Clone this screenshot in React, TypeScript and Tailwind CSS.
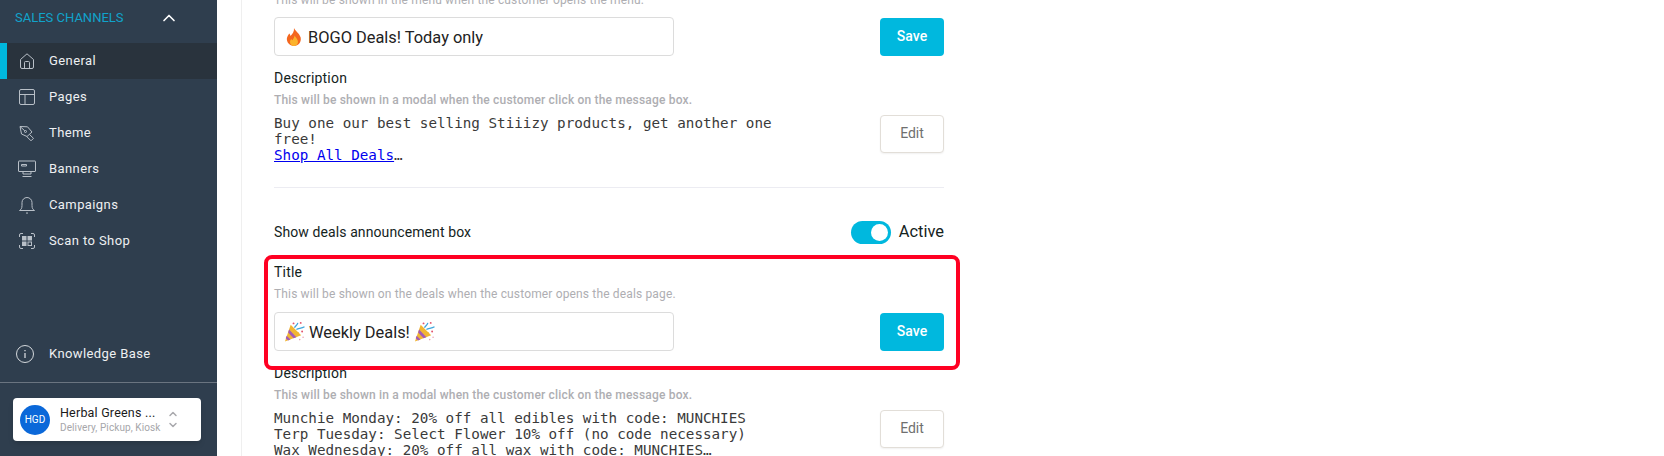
import { ChevronUp, ChevronDown } from 'lucide-react';
import type { ReactNode } from 'react';

const iconClass = "w-[18px] h-[18px] text-[#b9c0c8]";

function Icon({ children, className }: { children: ReactNode; className?: string }) {
    return (
        <svg viewBox="0 0 18 18" fill="none" stroke="currentColor" strokeWidth="1" className={className || iconClass}>
            {children}
        </svg>
    );
}

const navItems: { label: string; active?: boolean; icon: ReactNode }[] = [
    {
        label: "General",
        active: true,
        icon: <Icon><path d="M2.5 7.5 9 1.8l6.500 5.700V15a1.500 1.500 0 0 1-1.500 1.500H4A1.500 1.500 0 0 1 2.500 15z" /><path d="M6.500 16.500V10.500a1 1 0 0 1 1-1h3a1 1 0 0 1 1 1v6" /></Icon>,
    },
    {
        label: "Pages",
        icon: <Icon><rect x="1.500" y="1.500" width="15" height="15" rx="1.500" /><path d="M1.500 6.500h15M7 6.500v10" /></Icon>,
    },
    {
        label: "Theme",
        icon: <Icon><path d="M2 2.500 9.500 2.800 14 8l-5 4.500-5.500-2.500z" /><path d="m11.500 10.500 4 3.800-2.500 2.500-4-4" /><circle cx="7.500" cy="7.500" r="1" /><path d="M2 2.500 6.800 6.800" /></Icon>,
    },
    {
        label: "Banners",
        icon: <Icon className="w-[20px] h-[18px] text-[#b9c0c8]"><rect x="0.500" y="1" width="17" height="10.500" rx="0.500" /><path d="M3.500 4.500h5v1.500h-5zM5 11.500v2.500h8v-2.500M4.500 16.500h9" /></Icon>,
    },
    {
        label: "Campaigns",
        icon: <Icon><path d="M1.500 14.500c1.500-1 2.500-2 2.500-5V6.500a5 5 0 0 1 10 0v3c0 3 1 4 2.500 5z" /><path d="M8 16.800 9 17.300l1-.5" /></Icon>,
    },
    {
        label: "Scan to Shop",
        icon: <Icon><path d="M1.500 5V3a1.500 1.500 0 0 1 1.500-1.500h2M13 1.500h2A1.500 1.500 0 0 1 16.500 3v2M16.500 13v2a1.500 1.500 0 0 1-1.500 1.500h-2M5 16.500H3A1.500 1.500 0 0 1 1.500 15v-2" /><rect x="4.500" y="4.500" width="3.500" height="3.500" fill="currentColor" /><rect x="10" y="4.500" width="3.500" height="3.500" fill="currentColor" /><rect x="4.500" y="10" width="3.500" height="3.500" fill="currentColor" /><rect x="10" y="10" width="3.500" height="3.500" /></Icon>,
    },
];

function FireIcon() {
    return (
        <svg viewBox="0 0 18 20" className="w-[16px] h-[20px] shrink-0 mx-[2px]">
            <path d="M9 0c1 3 6 6 7.500 10.500C17.500 15.500 14 20 9 20S.5 16 1 11.500C1.300 9 3 7.500 3.500 6c1 .8 1.500 2 1.500 3C7 7 9.500 4 9 0z" fill="#f4671f" />
            <path d="M9.500 8c.5 2 4 4 4 7.500 0 2.500-2 4.500-4.500 4.500s-4.500-2-4.500-4.500c0-1.500.8-2.500 1.500-3.300.3.800.8 1.300 1.300 1.500C8 12 9.800 10.500 9.500 8z" fill="#fbb32c" />
        </svg>
    );
}

function PartyIcon() {
    return (
        <svg viewBox="0 0 22 22" className="w-[21px] h-[21px] shrink-0">
            <path d="M7 4 18 15 1 21.500z" fill="#f2b632" />
            <path d="M5.300 9 13 17l-3 1.200L4.300 12zM2.800 15.500l4 3.800-2.500 1-2.500-2.300z" fill="#a35bb5" />
            <path d="M11 7c1-2 3-2.500 3.500-5M13 9c2-1.500 5-1 8.500-3" stroke="#3ea6dc" strokeWidth="1.300" fill="none" />
            <circle cx="10" cy="2.500" r="1" fill="#e2526b" />
            <circle cx="17.500" cy="2" r="1" fill="#e2526b" />
            <circle cx="19" cy="11" r="1" fill="#e2526b" />
            <circle cx="15" cy="12.500" r=".8" fill="#f2b632" />
            <circle cx="20" cy="17" r=".8" fill="#e8a0b0" />
            <circle cx="16.500" cy="19.500" r=".8" fill="#e8a0b0" />
        </svg>
    );
}

function TextField({ children }: { children: ReactNode }) {
    return (
        <div className="flex items-center gap-[4px] w-[400px] h-[39px] pl-[9px] border border-[#dcdcdc] rounded text-[16.4px] text-[#222]">
            {children}
        </div>
    );
}

function SaveButton() {
    return (
        <button className="w-[64px] h-[38px] rounded bg-[#00b8de] text-white text-[14px] font-medium">
            Save
        </button>
    );
}

function EditButton() {
    return (
        <button className="w-[64px] h-[38px] pb-[1px] rounded border border-[#e2ded8] bg-white text-[#6f6f6f] text-[14px] shadow-[0_1px_2px_rgba(0,0,0,0.06)]">
            Edit
        </button>
    );
}

function DescriptionBlock({ lines }: { lines: ReactNode[] }) {
    return (
        <div>
            <p className="text-[14px] leading-[16px] tracking-[0.2px] text-[#14231d]">Description</p>
            <p className="mt-[6px] text-[12px] leading-[16px] font-medium tracking-[0.18px] text-[#aeaeb2]">
                This will be shown in a modal when the customer click on the message box.
            </p>
            <div className="flex justify-between items-start mt-[7px]">
                <div className="font-['DejaVu_Sans_Mono',monospace] text-[14.25px] leading-[16px] text-[#3a3a3a] whitespace-pre">
                    {lines.map((line, i) => (
                        <div key={i}>{line}</div>
                    ))}
                </div>
                <EditButton />
            </div>
        </div>
    );
}

export default function App() {
    return (
        <div className="flex h-screen overflow-hidden bg-white font-['Roboto',sans-serif]">
            {/* Sidebar */}
            <aside className="flex flex-col w-[217px] shrink-0 bg-[#2f3e4e] text-white">
                <div className="flex items-center justify-between h-[43px] pl-[15px] pr-[38px] pb-[8px]">
                    <span className="text-[13px] text-[#11a3cb]">SALES CHANNELS</span>
                    <ChevronUp size={20} strokeWidth={2} className="text-white" />
                </div>
                <nav>
                    {navItems.map((item) => (
                        <div
                            key={item.label}
                            className={`flex items-center h-[36px] border-l-[7px] pl-[10px] ${item.active ? "bg-[#29333d] border-[#00b8de]" : "border-transparent"}`}
                        >
                            <span className="flex justify-center w-[20px] mr-[12px]">{item.icon}</span>
                            <span className="text-[13px] tracking-[0.4px] text-[#eef0f2]">{item.label}</span>
                        </div>
                    ))}
                </nav>
                <div className="mt-auto">
                    <div className="flex items-center h-[36px] pl-[16px]">
                        <svg viewBox="0 0 18 18" fill="none" stroke="currentColor" className="w-[18px] h-[18px] mr-[15px] text-[#d4d8dc]">
                            <circle cx="9" cy="9" r="8.500" />
                            <path d="M9 8v5M9 5v1.200" strokeWidth="1.300" />
                        </svg>
                        <span className="text-[13px] tracking-[0.4px] text-[#eef0f2]">Knowledge Base</span>
                    </div>
                    <div className="border-t border-[#6a7480] mt-[10px] pt-[15px] pb-[15px] px-[13px]">
                        <div className="flex items-center h-[43px] w-[188px] rounded bg-white pl-[7px] shadow-md">
                            <div className="flex items-center justify-center w-[30px] h-[30px] rounded-full bg-[#0b68d9] text-white text-[10px] shrink-0">HGD</div>
                            <div className="ml-[10px] w-[102px] min-w-0">
                                <p className="text-[12.5px] leading-[15px] tracking-[0.2px] text-[#1a1a1a] whitespace-nowrap">Herbal Greens ...</p>
                                <p className="text-[10px] leading-[12px] mt-[2px] tracking-[0.1px] text-[#a6a6aa] whitespace-nowrap">Delivery, Pickup, Kiosk</p>
                            </div>
                            <div className="flex flex-col items-center ml-[5px] text-[#a9a9ad]">
                                <ChevronUp size={12} strokeWidth={3} className="-mb-[1px]" />
                                <ChevronDown size={12} strokeWidth={3} />
                            </div>
                        </div>
                    </div>
                </div>
            </aside>

            {/* Settings panel */}
            <main className="ml-[24px] w-[703px] pl-[32px] border-l border-[#efefef]">
                <p className="-mt-[8px] text-[12px] leading-[16px] tracking-[0.15px] text-[#aeaeb2]">
                    This will be shown in the menu when the customer opens the menu.
                </p>
                <div className="flex items-center justify-between mt-[9px]">
                    <TextField>
                        <FireIcon />
                        <span className="pt-[4px]">BOGO Deals! Today only</span>
                    </TextField>
                    <SaveButton />
                </div>
                <div className="mt-[14px]">
                    <DescriptionBlock
                        lines={[
                            "Buy one our best selling Stiiizy products, get another one",
                            "free!",
                            <span><span className="text-[#0000ee] underline">Shop All Deals</span>…</span>,
                        ]}
                    />
                </div>
                <div className="border-t border-[#ececf2] mt-[24px]" />
                <div className="flex items-center justify-between mt-[32px] h-[24px]">
                    <span className="text-[14px] tracking-[0.1px] text-[#14231d]">Show deals announcement box</span>
                    <div className="flex items-center gap-[8px]">
                        <div className="flex items-center justify-end w-[40px] h-[23px] pr-[3px] rounded-full bg-[#00b8de]">
                            <div className="w-[17px] h-[17px] rounded-full bg-white" />
                        </div>
                        <span className="text-[16.4px] text-[#14231d]">Active</span>
                    </div>
                </div>

                {/* Title section with the red highlight over it */}
                <div className="relative mt-[20px]">
                    <div className="absolute -top-[9px] -left-[10px] -right-[16px] h-[115px] border-[4px] border-[#ff0022] rounded-lg" />
                    <p className="text-[14px] leading-[16px] tracking-[0.2px] text-[#14231d]">Title</p>
                    <p className="mt-[6px] text-[12px] leading-[16px] tracking-[0.15px] text-[#aeaeb2]">
                        This will be shown on the deals when the customer opens the deals page.
                    </p>
                    <div className="flex items-center justify-between mt-[10px]">
                        <TextField>
                            <PartyIcon />
                            <span className="pt-[4px]">Weekly Deals!</span>
                            <PartyIcon />
                        </TextField>
                        <SaveButton />
                    </div>
                </div>
                <div className="mt-[14px]">
                    <DescriptionBlock
                        lines={[
                            "Munchie Monday: 20% off all edibles with code: MUNCHIES",
                            "Terp Tuesday: Select Flower 10% off (no code necessary)",
                            "Wax Wednesday: 20% off all wax with code: MUNCHIES…",
                        ]}
                    />
                </div>
            </main>
        </div>
    );
}
